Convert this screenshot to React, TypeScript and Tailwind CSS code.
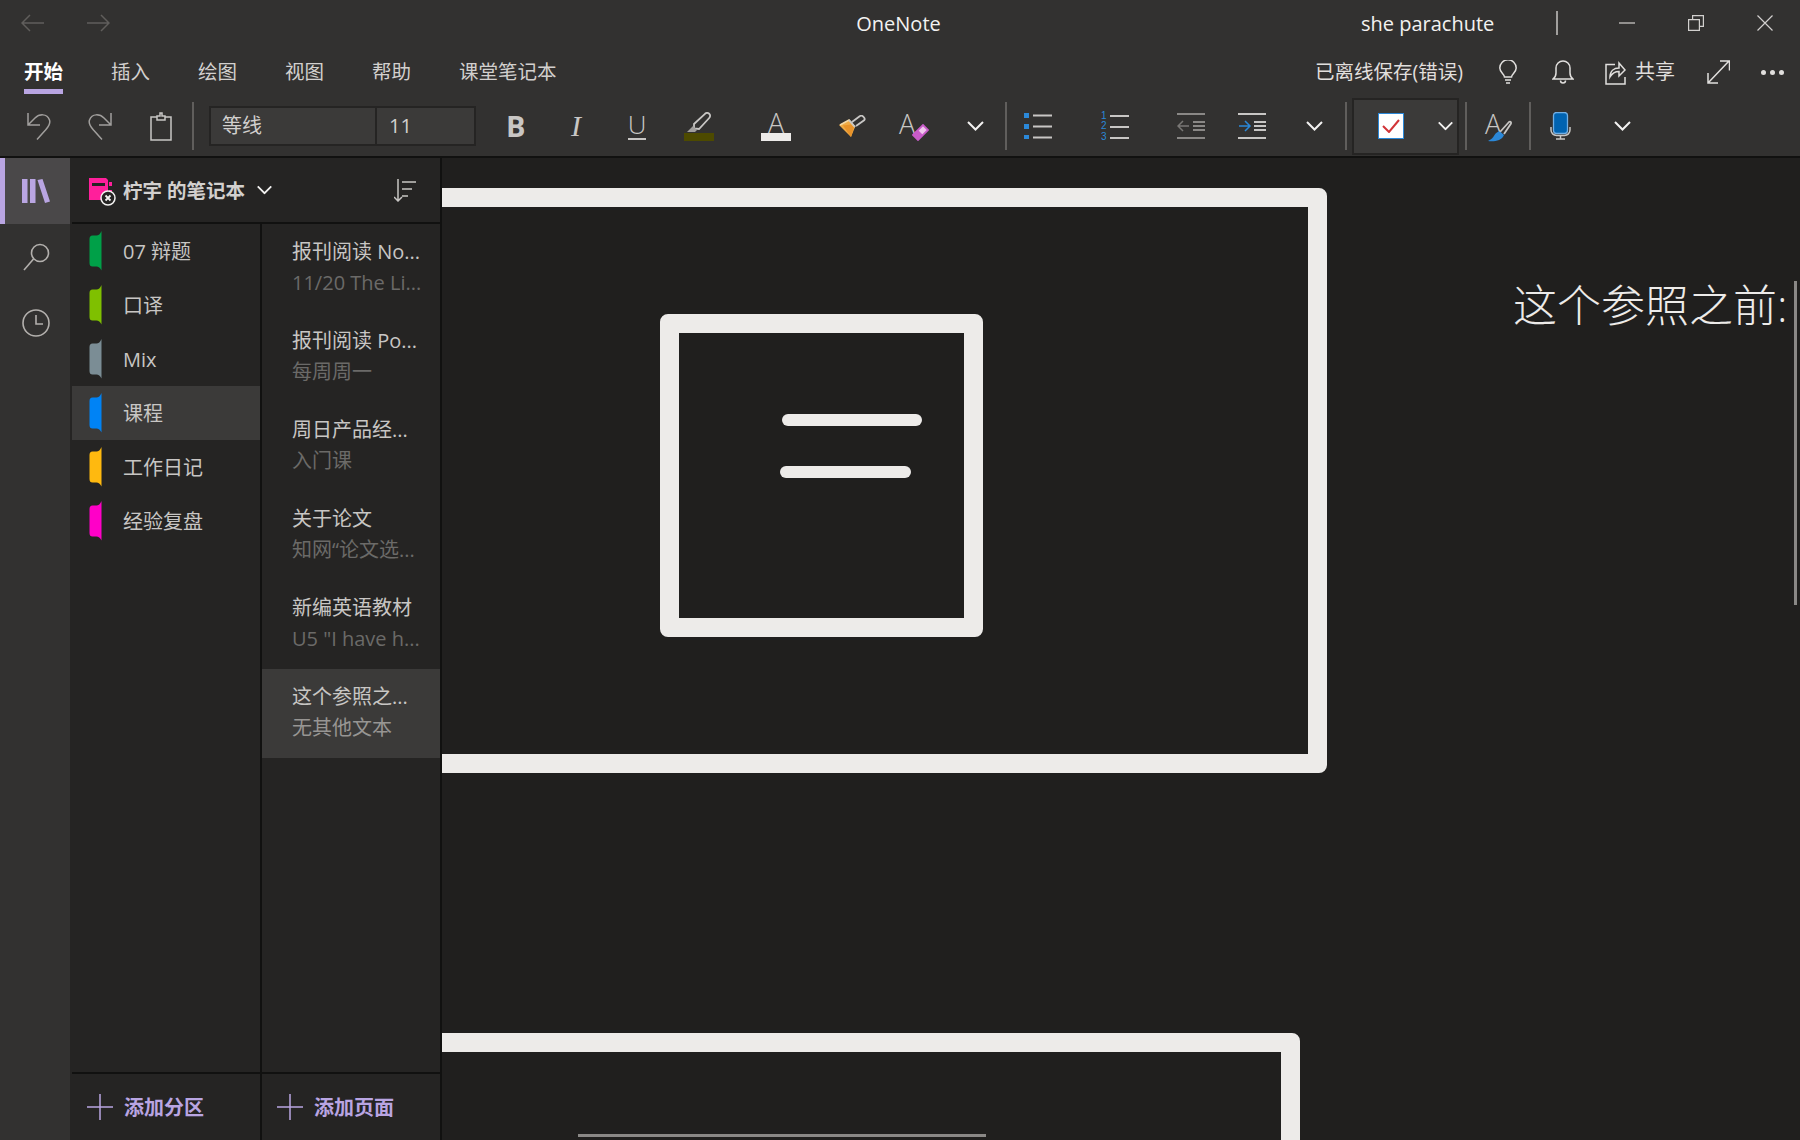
import React from "react"

const sections = [
    { name: "07 辩题", color: "#00a048" },
    { name: "口译", color: "#7fc000" },
    { name: "Mix", color: "#7b8d95" },
    { name: "课程", color: "#0083f5", active: true },
    { name: "工作日记", color: "#ffb90f" },
    { name: "经验复盘", color: "#ff00c8" },
]

const pages = [
    { title: "报刊阅读 No...", sub: "11/20 The Li..." },
    { title: "报刊阅读 Po...", sub: "每周周一" },
    { title: "周日产品经...", sub: "入门课" },
    { title: "关于论文", sub: "知网“论文选..." },
    { title: "新编英语教材", sub: "U5 \"I have h..." },
    { title: "这个参照之...", sub: "无其他文本", active: true },
]

const tabs = ["开始", "插入", "绘图", "视图", "帮助", "课堂笔记本"]

function Chevron({ className = "" }: { className?: string }) {
    return (
        <svg viewBox="0 0 17 10" className={`w-[17px] h-[10px] ${className}`} fill="none" stroke="#f3f2f1" strokeWidth="2">
            <path d="M1 1l7.5 7.5L16 1" />
        </svg>
    )
}

function Sep({ className = "" }: { className?: string }) {
    return <div className={`w-[2px] h-[48px] bg-[#605e5c] ${className}`} />
}

function TitleBar() {
    return (
        <div className="h-[46px] flex items-center relative">
            <svg viewBox="0 0 23 18" className="ml-[21px] w-[23px] h-[18px]" fill="none" stroke="#605e5c" strokeWidth="1.5">
                <path d="M23 9H1M9 1L1 9l8 8" />
            </svg>
            <svg viewBox="0 0 23 18" className="ml-[43px] w-[23px] h-[18px]" fill="none" stroke="#605e5c" strokeWidth="1.5">
                <path d="M0 9h22M14 1l8 8-8 8" />
            </svg>
            <div className="ml-[746px] w-[85px] pt-[1px] text-[20px] text-[#f3f2f1] text-center whitespace-nowrap">OneNote</div>
            <div className="ml-[420px] w-[131px] pt-[1px] text-[20px] text-[#f3f2f1] text-center whitespace-nowrap">she parachute</div>
            <div className="ml-[64px] w-[2px] h-[24px] bg-[#a19f9d]" />
            <svg viewBox="0 0 16 2" className="ml-[61px] w-[16px] h-[2px]"><path d="M0 1h16" stroke="#d2d0ce" strokeWidth="1.2" /></svg>
            <svg viewBox="0 0 16 16" className="ml-[53px] w-[16px] h-[16px]" fill="none" stroke="#d2d0ce" strokeWidth="1.2">
                <path d="M.6 4.6h10.8v10.8H.6zM4.6 4.6V.6h10.8v10.8h-4" />
            </svg>
            <svg viewBox="0 0 16 16" className="ml-[53px] w-[16px] h-[16px]" fill="none" stroke="#d2d0ce" strokeWidth="1.2">
                <path d="M.5.5l15 15M15.500 .5l-15 15" />
            </svg>
        </div>
    )
}

function TabsRow() {
    return (
        <div className="h-[52px] pl-[24px] pt-[12px] flex items-start text-[20px] leading-[28px] text-[#d2d0ce]">
            {tabs.map((t, i) => (
                <div key={t} className={i === 0 ? "" : "ml-[48px]"}>
                    <div className={i === 0 ? "font-bold text-white text-[19.5px]" : "text-[19.5px]"}>{t}</div>
                    {i === 0 && <div className="mt-[3px] h-[5px] bg-[#b9a5e2]" />}
                </div>
            ))}
            <div className="ml-auto flex items-center h-[28px] text-[#e1dfdd]">
                <div className="text-[19.5px] whitespace-nowrap">已离线保存(错误)</div>
                <svg viewBox="0 0 18 24" className="ml-[36px] w-[18px] h-[24px]" fill="none" stroke="#e1dfdd" strokeWidth="1.5">
                    <path d="M5.500 17c0-3-4.700-4.500-4.700-9a8.200 8.200 0 0 1 16.400 0c0 4.500-4.700 6-4.700 9zM6 20h6M7 23h4" />
                </svg>
                <svg viewBox="0 0 22 24" className="ml-[35px] w-[22px] h-[24px]" fill="none" stroke="#e1dfdd" strokeWidth="1.500">
                    <path d="M1 19c2-1.500 3-3 3-6V8a7 7 0 0 1 14 0v5c0 3 1 4.500 3 6zM8.500 20.500a2.500 2.500 0 0 0 5 0" />
                </svg>
                <svg viewBox="0 0 21 26" className="ml-[31px] w-[21px] h-[26px]" fill="none" stroke="#e1dfdd" strokeWidth="1.500">
                    <path d="M10 5.500H1V25h19v-7M5 18c0-6 4-9 9-9V4l6 7-6 6v-4.500c-4 0-7 2-9 5.500z" />
                </svg>
                <div className="ml-[9px] mr-[32px]">共享</div>
                <svg viewBox="0 0 23 24" className="w-[23px] h-[24px]" fill="none" stroke="#e1dfdd" strokeWidth="1.500">
                    <path d="M1.500 22.500l20-21M13 1h9.500v9.500M1 13v10h10" />
                </svg>
                <div className="ml-[31px] mr-[16px] flex gap-[4px]">
                    <span className="w-[5px] h-[5px] rounded-full bg-[#e1dfdd]" />
                    <span className="w-[5px] h-[5px] rounded-full bg-[#e1dfdd]" />
                    <span className="w-[5px] h-[5px] rounded-full bg-[#e1dfdd]" />
                </div>
            </div>
        </div>
    )
}

function ToolBar() {
    return (
        <div className="h-[58px] pb-[2px] pl-[27px] flex items-center text-[#c8c6c4]">
            <svg viewBox="0 0 24 28" className="w-[24px] h-[28px]" fill="none" stroke="#a19f9d" strokeWidth="1.500">
                <path d="M1 1v12h12M1 13l7-7c4-4 12-5 14.500 2 1.500 4-1.500 7-4 10L10 27.500" />
            </svg>
            <svg viewBox="0 0 24 28" className="ml-[37px] w-[24px] h-[28px]" fill="none" stroke="#a19f9d" strokeWidth="1.500">
                <path d="M23 1v12H11M23 13l-7-7C12 2 4 1 1.500 8 0 12 3 15 5.500 18L14 27.500" />
            </svg>
            <svg viewBox="0 0 22 29" className="ml-[38px] w-[22px] h-[29px]" fill="none" stroke="#c8c6c4" strokeWidth="1.500">
                <path d="M7 5H1v23h20V5h-6M7 8V4h3V1h2v3h3v4z" />
            </svg>
            <Sep className="ml-[20px]" />
            <div className="ml-[15px] w-[267px] h-[40px] flex border-2 border-[#252423] bg-[#3b3a39] text-[20px] text-[#d2d0ce]">
                <div className="w-[166px] pl-[11px] leading-[36px] border-r-2 border-[#252423]">等线</div>
                <div className="pl-[12px] leading-[36px]">11</div>
            </div>
            <div className="ml-[30px] w-[17px] pb-[2px] font-['Open_Sans'] text-[29px] leading-none font-bold text-[#c8c6c4]">B</div>
            <div className="ml-[48px] w-[18px] font-['Liberation_Serif'] text-[30px] leading-none italic text-[#c8c6c4]">I</div>
            <div className="ml-[38px] w-[20px] flex flex-col items-center">
                <div className="text-[26px] leading-[24px] font-light text-[#c8c6c4]">U</div>
                <div className="w-[18px] h-[2px] bg-[#c8c6c4] mt-[2px]" />
            </div>
            <div className="ml-[36px] w-[32px] flex flex-col items-center">
                <svg viewBox="0 0 26 20" className="w-[26px] h-[20px]" fill="none" stroke="#c8c6c4" strokeWidth="1.800">
                    <path d="M8 12L19 1.800c1.500-1.300 3-1 4.200 0s1.300 2.800 0 4.200L13 17l-5-.5z" />
                    <path d="M1 20l6-6 4 4-2 2z" fill="#a19f9d" stroke="none" />
                </svg>
                <div className="w-[30px] h-[8px] mt-[1px] bg-[#4d4a00]" />
            </div>
            <div className="ml-[46px] w-[30px] flex flex-col items-center">
                <div className="text-[27px] leading-[21px] font-light text-[#c8c6c4]">A</div>
                <div className="w-[30px] h-[8px] bg-[#edebe9]" />
            </div>
            <svg viewBox="0 0 27 22" className="ml-[48px] w-[27px] h-[22px]">
                <path d="M0 10l10-5 6 7-4 10z" fill="#f0ab45" />
                <path d="M4 10.500l8-1 3 2.500-3 10z" fill="#e8932a" />
                <path d="M1 10l9-5 6 7" fill="none" stroke="#f3d9a8" strokeWidth="1.500" />
                <path d="M10 5l6 7M13 7l8-6c1-.8 2-.6 3.500.8s1.500 2.500.6 3.500L17 11" fill="none" stroke="#c8c6c4" strokeWidth="1.800" />
            </svg>
            <div className="ml-[33px] w-[30px] h-[32px] relative text-[27px] leading-[28px] font-light text-[#c8c6c4]">
                A
                <svg viewBox="0 0 17 17" className="absolute left-[13px] top-[14px] w-[17px] h-[17px]">
                    <path d="M1 11l10-10 5 5-10 10z" fill="#f0c8ee" />
                    <path d="M1 11l5-5 5 5-5 5z" fill="#c85cc9" />
                    <path d="M1 11l10-10 5 5-10 10z" fill="none" stroke="#c85cc9" strokeWidth="1.800" />
                </svg>
            </div>
            <Chevron className="ml-[38px]" />
            <Sep className="ml-[21px]" />
            <svg viewBox="0 0 28 26" className="ml-[17px] w-[28px] h-[26px]">
                <path d="M0 0h5v5H0zM0 11h5v5H0zM0 22h5v4H0z" fill="#2b88d8" />
                <path d="M9 2.500h19M9 13.500h19M9 24.500h19" stroke="#c8c6c4" strokeWidth="2" />
            </svg>
            <div className="ml-[49px] w-[28px] h-[31px] flex">
                <div className="w-[9px] flex flex-col text-[10px] leading-[10.500px] text-[#2b88d8] font-['Liberation_Sans',sans-serif]">
                    <span className="h-[10.500px]">1</span>
                    <span className="h-[10.500px]">2</span>
                    <span className="h-[10.500px]">3</span>
                </div>
                <div className="w-[19px] pt-[4px] flex flex-col gap-[9px]">
                    <div className="h-[2px] bg-[#c8c6c4]" />
                    <div className="h-[2px] bg-[#c8c6c4]" />
                    <div className="h-[2px] bg-[#c8c6c4]" />
                </div>
            </div>
            <svg viewBox="0 0 28 26" className="ml-[48px] w-[28px] h-[26px]" fill="none">
                <path d="M0 1h28M16 9h12M16 13h12M16 17h12M0 25h28" stroke="#8a8886" strokeWidth="2" />
                <path d="M12 13H1M6 8l-5 5 5 5" stroke="#797775" strokeWidth="1.500" />
            </svg>
            <svg viewBox="0 0 28 26" className="ml-[33px] w-[28px] h-[26px]" fill="none">
                <path d="M0 1h28M16 9h12M16 13h12M16 17h12M0 25h28" stroke="#c8c6c4" strokeWidth="2" />
                <path d="M1 13h11M7 8l5 5-5 5" stroke="#2b88d8" strokeWidth="1.500" />
            </svg>
            <Chevron className="ml-[40px]" />
            <Sep className="ml-[22px]" />
            <div className="ml-[5px] w-[107px] h-[57px] flex items-center border-2 border-[#252423] bg-[#3b3a39]">
                <div className="ml-[24px] w-[26px] h-[26px] bg-white border border-[#2b88d8] flex items-center justify-center">
                    <svg viewBox="0 0 18 14" className="w-[18px] h-[14px]" fill="none" stroke="#d13438" strokeWidth="2">
                        <path d="M1 7l6 6L17 1" />
                    </svg>
                </div>
                <Chevron className="ml-[33px] scale-90" />
            </div>
            <Sep className="ml-[6px]" />
            <div className="ml-[18px] w-[27px] h-[32px] relative text-[27px] leading-[28px] font-light text-[#c8c6c4]">
                A
                <svg viewBox="0 0 26 22" className="absolute left-[2px] top-[10px] w-[26px] h-[22px]" fill="none">
                    <path d="M13 12L22 2c1-1 2.500 0 2 1.500L17 14" stroke="#c8c6c4" strokeWidth="1.800" />
                    <path d="M1 21c5 1 14 0 16-6l-4-3.500c-6 0-5 7-12 9.500z" fill="#2b88d8" />
                </svg>
            </div>
            <Sep className="ml-[17px]" />
            <svg viewBox="0 0 21 28" className="ml-[19px] w-[21px] h-[28px]" fill="none">
                <rect x="3.500" y=".5" width="14" height="21" rx="3" fill="#0063b1" stroke="#71afe5" strokeWidth="1.300" />
                <path d="M1 15v3a5.500 5.500 0 0 0 5.500 5.500h8a5.500 5.500 0 0 0 5.500-5.500v-3M10.500 23.500v3M6 27h9" stroke="#c8c6c4" strokeWidth="1.500" />
            </svg>
            <Chevron className="ml-[43px]" />
        </div>
    )
}

function Rail() {
    return (
        <div className="w-[70px] shrink-0 bg-[#323130]">
            <div className="h-[66px] flex items-center justify-center border-l-[5px] border-[#b9a5e2] bg-[#4a4849] pr-[3px]">
                <svg viewBox="0 0 28 24" className="w-[28px] h-[24px]" fill="#b9a5e2">
                    <path d="M0 0h5.500v24H0zM8 0h5.500v24H8zM15.500 1l5-1 7.500 22.500-5 1.500z" />
                </svg>
            </div>
            <div className="h-[66px] pl-[2px] flex items-center justify-center">
                <svg viewBox="0 0 27 28" className="w-[27px] h-[28px]" fill="none" stroke="#b3b0ad" strokeWidth="1.600">
                    <circle cx="17" cy="10" r="8.500" />
                    <path d="M10.500 16L1 27" />
                </svg>
            </div>
            <div className="h-[66px] pl-[2px] flex items-center justify-center">
                <svg viewBox="0 0 28 28" className="w-[28px] h-[28px]" fill="none" stroke="#b3b0ad" strokeWidth="1.600">
                    <circle cx="14" cy="14" r="13" />
                    <path d="M14 6v9h7" />
                </svg>
            </div>
        </div>
    )
}

function NotebookHeader() {
    return (
        <div className="h-[66px] ml-[2px] border-b-2 border-[#111110] flex items-center text-[20px] text-[#d2d0ce]">
            <svg viewBox="0 0 27 28" className="ml-[17px] mt-[3px] w-[27px] h-[28px]">
                <path d="M0 0h17l2 2v20H0z" fill="#ff1f9b" />
                <path d="M3 5h13v3H3z" fill="#252423" />
                <path d="M20 4h3v4h-3zM20 12h3v4h-3z" fill="#ff1f9b" />
                <circle cx="19" cy="20" r="7" fill="#252423" stroke="#f3f2f1" strokeWidth="1.500" />
                <path d="M16.500 17.500l5 5M21.500 17.500l-5 5" stroke="#f3f2f1" strokeWidth="1.800" />
            </svg>
            <div className="ml-[7px] pt-[1px] text-[19.5px] font-bold whitespace-nowrap">柠宇 的笔记本</div>
            <Chevron className="ml-[11px] w-[14px] scale-90" />
            <svg viewBox="0 0 22 23" className="ml-auto mr-[24px] w-[22px] h-[23px]" fill="none" stroke="#c8c6c4" strokeWidth="1.500">
                <path d="M4 0v22M0 18l4 4 4-4M8 3h14M8 10h10M8 17h6" />
            </svg>
        </div>
    )
}

function SectionList() {
    return (
        <div className="w-[188px] ml-[2px] flex-1">
            {sections.map((s) => (
                <div key={s.name} className={`h-[54px] flex items-center text-[20px] text-[#c8c6c4] ${s.active ? "bg-[#3b3a39]" : ""}`}>
                    <svg viewBox="0 0 12 40" className="ml-[17px] w-[13px] h-[40px]" style={{ fill: s.color }}>
                        <path d="M12 0V39.500Q10 35.500 7 35.500H3Q0 35.500 0 32V8Q0 4.500 3 4.500H7Q10 4.500 12 0Z" />
                    </svg>
                    <div className="ml-[21px] pt-[2px] whitespace-nowrap">{s.name}</div>
                </div>
            ))}
        </div>
    )
}

function PageList() {
    return (
        <div className="w-[178px] flex-1">
            {pages.map((p) => (
                <div key={p.title} className={`h-[89px] pl-[30px] pt-[12px] text-[20px] leading-[31px] whitespace-nowrap overflow-hidden ${p.active ? "bg-[#3b3a39]" : ""}`}>
                    <div className="text-[#c8c6c4]">{p.title}</div>
                    <div className={p.active ? "text-[#979593]" : "text-[#6b6a68]"}>{p.sub}</div>
                </div>
            ))}
        </div>
    )
}

function AddButton({ label }: { label: string }) {
    return (
        <div className="h-[66px] flex items-center text-[20px] font-bold text-[#b9a5e2]">
            <svg viewBox="0 0 26 26" className="ml-[15px] w-[26px] h-[26px]" fill="none" stroke="#b9a5e2" strokeWidth="1.500">
                <path d="M13 0v26M0 13h26" />
            </svg>
            <div className="ml-[11px] pt-[1px] whitespace-nowrap">{label}</div>
        </div>
    )
}

function Canvas() {
    return (
        <div className="flex-1 relative overflow-hidden bg-[#201f1e]">
            <div className="absolute left-[-20px] top-[30px] w-[905px] h-[585px] rounded-[8px] border-[19px] border-[#edebe9]" />
            <div className="absolute left-[218px] top-[156px] w-[323px] h-[323px] rounded-[8px] border-[19px] border-[#edebe9]" />
            <div className="absolute left-[340px] top-[256px] w-[140px] h-[12px] rounded-full bg-[#edebe9]" />
            <div className="absolute left-[338px] top-[308px] w-[131px] h-[12px] rounded-full bg-[#edebe9]" />
            <div className="absolute left-[-20px] top-[875px] w-[878px] h-[400px] rounded-[8px] border-[19px] border-[#edebe9]" />
            <div className="absolute left-[1071px] top-[117px] text-[44px] leading-[60px] font-light text-[#edebe9] whitespace-nowrap">这个参照之前:</div>
            <div className="absolute left-[1352px] top-[123px] w-[3px] h-[324px] bg-[#8a8886]" />
            <div className="absolute left-[136px] top-[976px] w-[408px] h-[3px] bg-[#8a8886]" />
        </div>
    )
}

export default function App() {
    return (
        <div className="w-[1800px] h-[1140px] overflow-hidden flex flex-col bg-[#323130] font-['Open_Sans','Noto_Sans_CJK_SC',sans-serif]">
            <TitleBar />
            <TabsRow />
            <ToolBar />
            <div className="h-[2px] bg-[#111110]" />
            <div className="flex-1 flex min-h-0">
                <Rail />
                <div className="w-[372px] shrink-0 flex flex-col bg-[#252423] border-r-2 border-[#111110]">
                    <NotebookHeader />
                    <div className="flex-1 flex min-h-0">
                        <div className="flex flex-col border-r-2 border-[#111110]">
                            <SectionList />
                            <div className="ml-[2px] border-t-2 border-[#111110]">
                                <AddButton label="添加分区" />
                            </div>
                        </div>
                        <div className="flex flex-col">
                            <PageList />
                            <div className="border-t-2 border-[#111110]">
                                <AddButton label="添加页面" />
                            </div>
                        </div>
                    </div>
                </div>
                <Canvas />
            </div>
        </div>
    )
}
